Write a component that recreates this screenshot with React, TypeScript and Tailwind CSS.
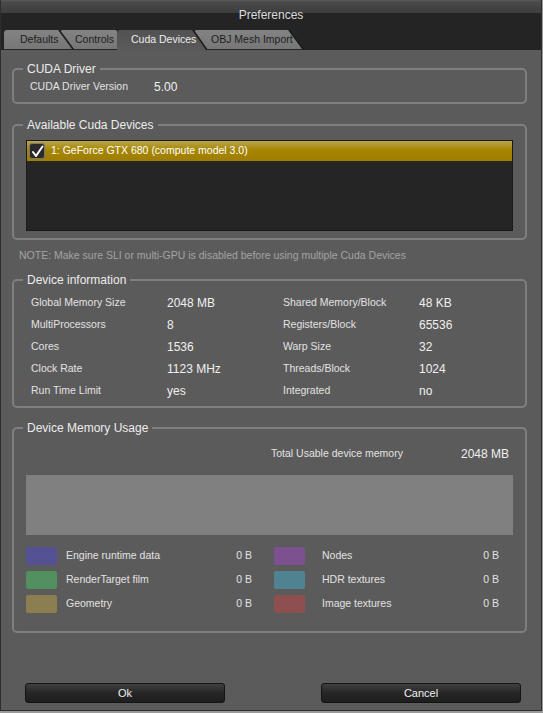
import React from "react";

const infoRows: [string, string, string, string][] = [
  ["Global Memory Size", "2048 MB", "Shared Memory/Block", "48 KB"],
  ["MultiProcessors", "8", "Registers/Block", "65536"],
  ["Cores", "1536", "Warp Size", "32"],
  ["Clock Rate", "1123 MHz", "Threads/Block", "1024"],
  ["Run Time Limit", "yes", "Integrated", "no"],
];

const memoryRows: [string, string, string, string][] = [
  ["bg-[#545194]", "Engine runtime data", "bg-[#7d5090]", "Nodes"],
  ["bg-[#529060]", "RenderTarget film", "bg-[#4f8391]", "HDR textures"],
  ["bg-[#8b7f51]", "Geometry", "bg-[#8d4f50]", "Image textures"],
];

const tabShape = "[clip-path:polygon(0_0,calc(100%-14px)_0,100%_100%,0_100%)]";

function Tab({
  label,
  active,
  className,
  pad,
}: {
  label: string;
  active?: boolean;
  className: string;
  pad: string;
}) {
  return (
    <div
      className={`${className} ${tabShape} shrink-0 rounded-tl-[3px] bg-[#1c1c1c] ${
        active ? "h-[20px]" : "h-[19px]"
      }`}
    >
      <div
        className={`h-full w-[calc(100%-2px)] ${tabShape} ${pad} rounded-tl-[3px] flex items-center text-[10.5px] ${
          active
            ? "bg-[linear-gradient(#525252,#5a5a5a)] text-[#ececec]"
            : "bg-[linear-gradient(#838383,#777777)] text-[#1e1e1e]"
        }`}
      >
        {label}
      </div>
    </div>
  );
}

function Group({
  title,
  className,
  children,
}: {
  title: string;
  className: string;
  children: React.ReactNode;
}) {
  return (
    <fieldset
      className={`ml-[11px] mr-[14px] rounded-[5px] border-2 border-[#7f7f7f] ${className}`}
    >
      <legend className="ml-[9px] px-[4px] text-[12px] leading-[16px] text-[#ececec]">
        {title}
      </legend>
      {children}
    </fieldset>
  );
}

export default function App() {
  return (
    <div className="w-[543px] h-[713px] bg-[#9a9a9a] font-['Liberation_Sans',Arial,sans-serif]">
      <div className="w-[542px] h-[711px] flex flex-col bg-[#5b5b5b] border-l border-r border-b border-[#2e2e2e]">
        {/* header */}
        <div className="h-[50px] shrink-0 flex flex-col bg-[linear-gradient(#5a5a5a_0,#4a4a4a_2px,#3d3d3d_13px,#242424_13px)]">
          <div className="h-[30px] pt-[8px] text-center text-[12px] leading-[14px] text-[#dcdcdc]">
            Preferences
          </div>
          <div className="h-[20px] flex items-start">
            <Tab label="Defaults" pad="pl-[16px]" className="relative z-30 ml-[3px] w-[70px]" />
            <Tab label="Controls" pad="pl-[15px]" className="relative z-20 -ml-[14px] w-[72px]" />
            <Tab label="Cuda Devices" pad="pl-[14px]" active className="relative z-40 -ml-[15px] w-[91px]" />
            <Tab label="OBJ Mesh Import" pad="pl-[17px]" className="relative z-10 -ml-[14px] w-[110px]" />
          </div>
        </div>

        {/* CUDA driver */}
        <Group title="CUDA Driver" className="mt-[11px] h-[43px]">
          <div className="flex items-center h-[16px] mt-[2px] pl-[16px]">
            <span className="w-[124px] text-[10.5px] text-[#e2e2e2]">CUDA Driver Version</span>
            <span className="text-[12px] text-[#f0f0f0]">5.00</span>
          </div>
        </Group>

        {/* devices */}
        <Group title="Available Cuda Devices" className="mt-[13px] h-[123px]">
          <div className="mt-[7px] ml-[12px] mr-[12px] h-[91px] bg-[#252525] border border-[#1a1a1a]">
            <div className="h-[20px] flex items-center bg-[linear-gradient(#b9a54f,#a68600_45%,#9f7d00)]">
              <div className="ml-[2px] w-[16px] h-[16px] rounded-[3px] bg-[#2a2a2a] border border-[#777] flex items-center justify-center">
                <svg width="13" height="13" viewBox="0 0 13 13">
                  <path d="M2 7 L5 11 L11.5 1.5" fill="none" stroke="#ffffff" strokeWidth="2" strokeLinecap="round" strokeLinejoin="round" />
                </svg>
              </div>
              <span className="ml-[6px] text-[10.5px] text-white">
                1: GeForce GTX 680 (compute model 3.0)
              </span>
            </div>
          </div>
        </Group>

        <div className="mt-[8px] ml-[18px] h-[14px] leading-[14px] text-[10.5px] text-[#a3a3a3]">
          NOTE: Make sure SLI or multi-GPU is disabled before using multiple Cuda Devices
        </div>

        {/* device info */}
        <Group title="Device information" className="mt-[10px] h-[136px]">
          <div className="mt-[4px] pl-[17px] grid grid-cols-[136px_116px_136px_1fr]">
            {infoRows.map((r) => (
              <React.Fragment key={r[0]}>
                <div className="h-[22px] flex items-center text-[10.5px] text-[#e2e2e2]">{r[0]}</div>
                <div className="h-[22px] flex items-center text-[12px] text-[#f0f0f0]">{r[1]}</div>
                <div className="h-[22px] flex items-center text-[10.5px] text-[#e2e2e2]">{r[2]}</div>
                <div className="h-[22px] flex items-center text-[12px] text-[#f0f0f0]">{r[3]}</div>
              </React.Fragment>
            ))}
          </div>
        </Group>

        {/* memory usage */}
        <Group title="Device Memory Usage" className="mt-[12px] h-[213px]">
          <div className="mt-[10px] h-[16px] flex items-center pl-[257px]">
            <span className="w-[190px] text-[10.5px] text-[#e2e2e2]">Total Usable device memory</span>
            <span className="text-[12px] text-[#f0f0f0]">2048 MB</span>
          </div>
          <div className="mt-[13px] ml-[12px] mr-[12px] h-[60px] bg-[#808080]" />
          <div className="mt-[12px] ml-[12px] flex flex-col gap-[6px]">
            {memoryRows.map((r) => (
              <div key={r[1]} className="flex items-center h-[18px]">
                <div className={`w-[31px] h-[18px] rounded-[2px] ${r[0]}`} />
                <span className="ml-[9px] w-[166px] text-[10.5px] text-[#e2e2e2]">{r[1]}</span>
                <span className="w-[20px] text-right text-[10.5px] text-[#e2e2e2]">0 B</span>
                <div className={`ml-[22px] w-[31px] h-[18px] rounded-[2px] ${r[2]}`} />
                <span className="ml-[17px] w-[157px] text-[10.5px] text-[#e2e2e2]">{r[3]}</span>
                <span className="w-[20px] text-right text-[10.5px] text-[#e2e2e2]">0 B</span>
              </div>
            ))}
          </div>
        </Group>

        {/* buttons */}
        <div className="mt-[50px] flex justify-between pl-[24px] pr-[20px]">
          <button className="w-[200px] h-[20px] rounded-[3px] border border-[#141414] bg-[linear-gradient(#404040,#262626_50%,#1e1e1e)] text-[11px] text-[#f0f0f0]">
            Ok
          </button>
          <button className="w-[200px] h-[20px] rounded-[3px] border border-[#141414] bg-[linear-gradient(#404040,#262626_50%,#1e1e1e)] text-[11px] text-[#f0f0f0]">
            Cancel
          </button>
        </div>
      </div>
    </div>
  );
}
